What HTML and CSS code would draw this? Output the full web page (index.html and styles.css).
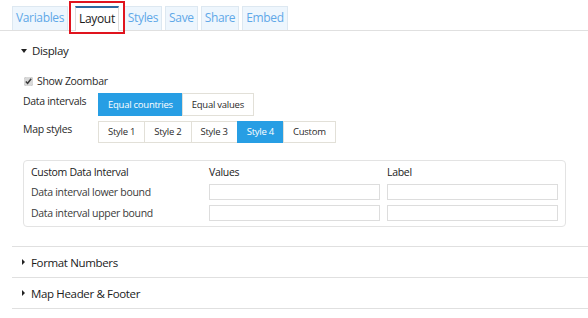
FILE: index.html
```html
<!DOCTYPE html>
<html lang="en">

<head>
    <meta charset="UTF-8">
    <meta name="viewport" content="width=device-width, initial-scale=1.0">
    <title>Layout</title>
    <link rel="stylesheet" href="styles.css">
</head>

<body>
    <ul class="tabs">
        <li class="tab">Variables</li>
        <li class="tab active">Layout</li>
        <li class="tab">Styles</li>
        <li class="tab">Save</li>
        <li class="tab">Share</li>
        <li class="tab">Embed</li>
    </ul>

    <div class="section open">
        <div class="section-head"><span class="caret down"></span>Display</div>
        <div class="section-body">
            <label class="check"><input type="checkbox" checked>Show Zoombar</label>
            <div class="row">
                <span class="row-label">Data intervals</span>
                <div class="btn-group">
                    <a class="btn active">Equal countries</a>
                    <a class="btn">Equal values</a>
                </div>
            </div>
            <div class="row">
                <span class="row-label">Map styles</span>
                <div class="btn-group">
                    <a class="btn style">Style 1</a>
                    <a class="btn style">Style 2</a>
                    <a class="btn style">Style 3</a>
                    <a class="btn style active">Style 4</a>
                    <a class="btn style">Custom</a>
                </div>
            </div>
            <div class="panel">
                <span class="th">Custom Data Interval</span>
                <span class="th">Values</span>
                <span class="th">Label</span>
                <span class="td">Data interval lower bound</span>
                <input class="field" type="text">
                <input class="field" type="text">
                <span class="td">Data interval upper bound</span>
                <input class="field" type="text">
                <input class="field" type="text">
            </div>
        </div>
    </div>

    <div class="section">
        <div class="section-head"><span class="caret right"></span>Format Numbers</div>
    </div>
    <div class="section last">
        <div class="section-head"><span class="caret right"></span>Map Header &amp; Footer</div>
    </div>
</body>

</html>
```
FILE: styles.css
```css
* {
    margin: 0;
    padding: 0;
    box-sizing: border-box;
}

body {
    font-family: "Open Sans", "Liberation Sans", sans-serif;
    color: #2a2a2a;
    background: #fff;
}

/* tabs */
.tabs {
    display: flex;
    list-style: none;
    margin-top: 6px;
    padding-left: 12px;
    border-bottom: 1px solid #e0e0e0;
    height: 25px;
}

.tab {
    height: 24px;
    line-height: 22px;
    padding: 0 3px;
    margin-right: 3px;
    font-size: 12px;
    letter-spacing: -0.35px;
    color: #5fa8e8;
    background: #eef6fd;
    border: 1px solid #dde8f1;
    border-bottom: none;
}

.tab.active {
    position: relative;
    margin: 0 5px 0 4px;
    padding: 0 3px;
    color: #1a1a1a;
    background: #fff;
    border-color: #ddd;
    border-top: 2px solid #2d6aa0;
    height: 25px;
    line-height: 21px;
}

/* annotation box */
.tab.active::after {
    content: "";
    position: absolute;
    left: -7px;
    right: -7px;
    top: -7px;
    bottom: -3px;
    border: 2px solid #e0141e;
}

/* sections */
.section {
    margin-left: 12px;
    border-bottom: 1px solid #e0e0e0;
}

.section.open {
    padding-bottom: 19px;
}

.section-head {
    display: flex;
    align-items: center;
    height: 30px;
    padding-left: 9px;
    font-size: 11.5px;
    letter-spacing: -0.35px;
    color: #1a1a1a;
}

.section.open .section-head {
    height: 38px;
    padding-top: 1px;
}

.caret {
    width: 0;
    height: 0;
    margin-right: 5px;
}

.caret.down {
    border-left: 3px solid transparent;
    border-right: 3px solid transparent;
    border-top: 4px solid #222;
}

.caret.right {
    margin-left: 1px;
    margin-right: 6px;
    border-top: 3px solid transparent;
    border-bottom: 3px solid transparent;
    border-left: 3px solid #222;
}

.section-body {
    padding: 0 22px 0 11px;
    font-size: 10.5px;
    letter-spacing: -0.3px;
}

.check {
    display: flex;
    align-items: center;
    height: 16px;
    margin-top: 4px;
}

.check input {
    width: 9px;
    height: 9px;
    margin: 0 4px 0 1px;
    accent-color: #d8d8d8;
}

.row {
    display: flex;
    align-items: flex-start;
    margin-top: 4px;
}

.row + .row {
    margin-top: 5px;
}

.row-label {
    width: 75px;
    line-height: 16px;
}

.btn-group {
    display: flex;
}

.btn {
    display: block;
    height: 23px;
    line-height: 21px;
    padding: 0 9px;
    font-size: 9.5px;
    letter-spacing: -0.25px;
    color: #2a2a2a;
    background: #fff;
    border: 1px solid #e2e0d8;
    margin-left: -1px;
}

.btn:first-child {
    margin-left: 0;
}

.btn.style {
    height: 22px;
    line-height: 20px;
    padding: 0 9px;
}

.btn.active {
    background: #279ee4;
    border-color: #279ee4;
    color: #fff;
}

/* custom data interval */
.panel {
    display: grid;
    grid-template-columns: 171px 171px 171px;
    column-gap: 7px;
    row-gap: 5px;
    align-items: center;
    margin-top: 17px;
    padding: 4px 7px 5px 7px;
    border: 1px solid #e3e3e3;
    border-radius: 4px;
}

.th {
    color: #1a1a1a;
    line-height: 14px;
}

.td {
    color: #3a3a3a;
}

.field {
    height: 16px;
    border: 1px solid #ddd;
    background: #fff;
}
```
